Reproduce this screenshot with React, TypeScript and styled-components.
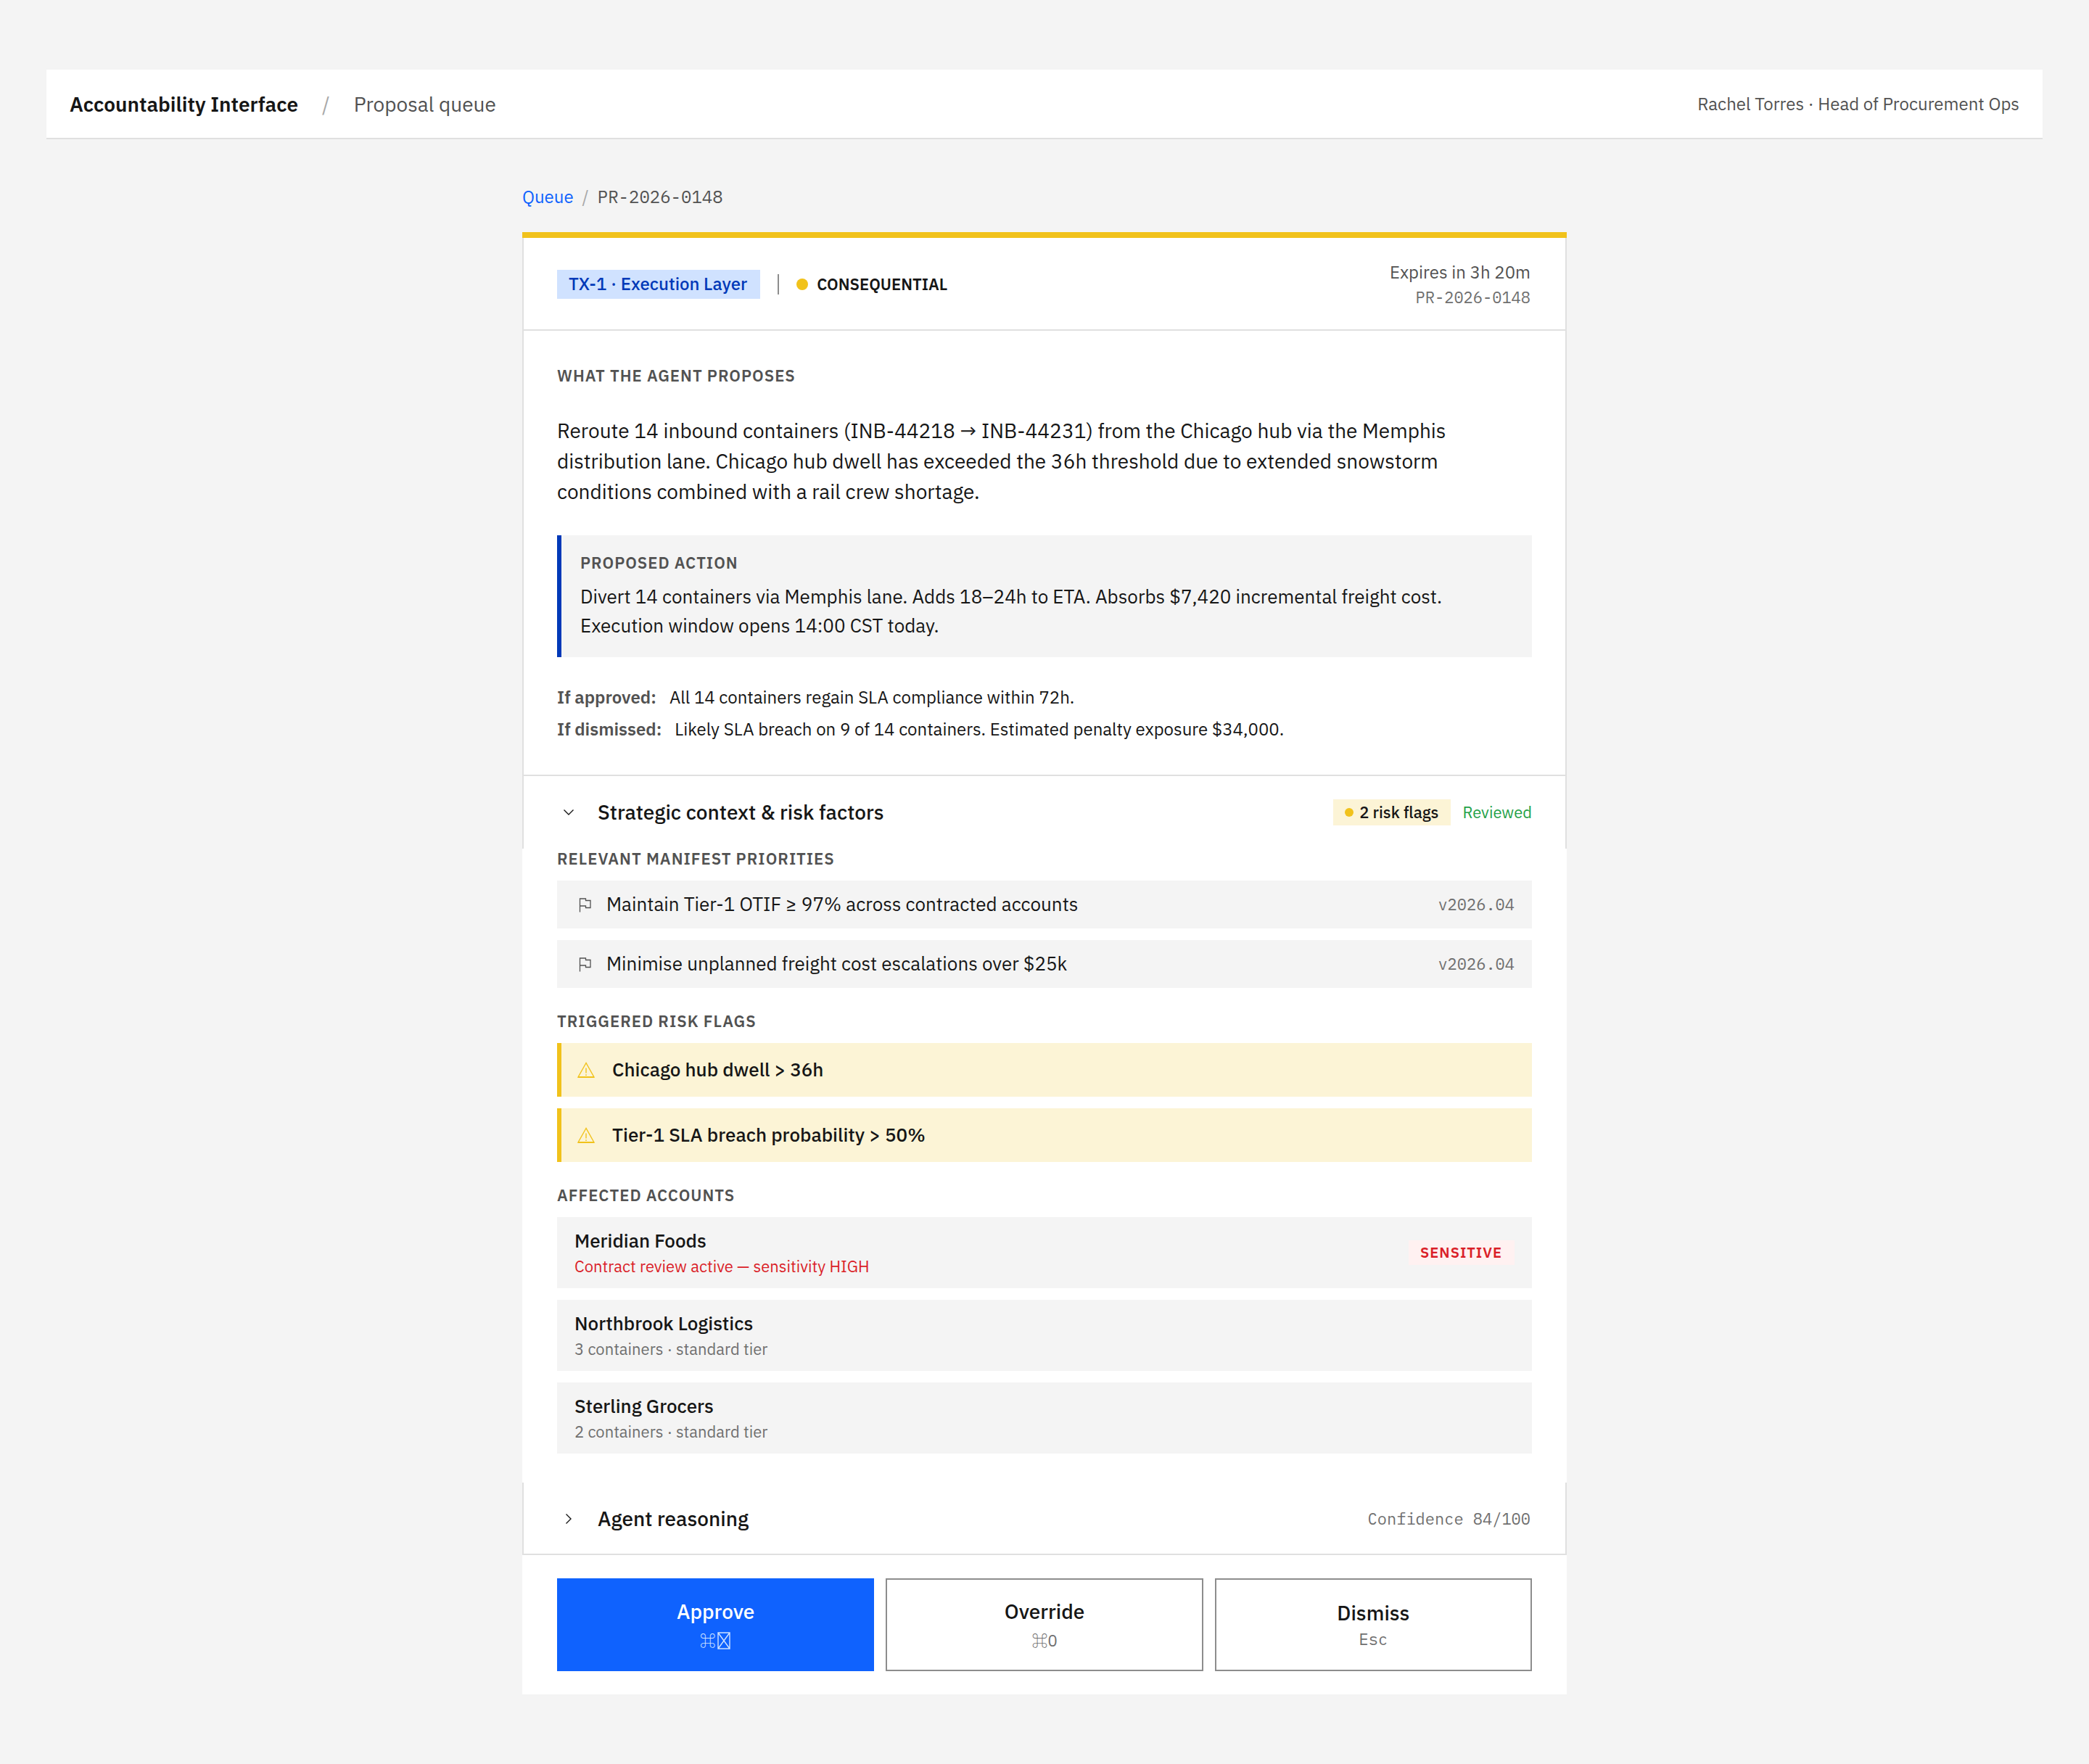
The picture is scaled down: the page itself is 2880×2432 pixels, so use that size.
import { useState } from 'react';
import styled, { createGlobalStyle } from 'styled-components';

const GlobalStyle = createGlobalStyle`
  * {
    box-sizing: border-box;
  }

  body {
    margin: 0;
    background: #f4f4f4;
    color: #161616;
    font-family: 'IBM Plex Sans', Roboto, 'Liberation Sans', sans-serif;
    font-size: 28px;
  }

  h1, h2, h3, p, ul, dl, dd {
    margin: 0;
    padding: 0;
  }

  ul {
    list-style: none;
  }

  button {
    font-family: inherit;
    color: inherit;
    cursor: pointer;
  }
`;

const Page = styled.div`
  padding: 96px 64px;
`;

const TopBar = styled.header`
  display: flex;
  align-items: center;
  justify-content: space-between;
  padding: 28px 32px 26px;
  background: #fff;
  border-bottom: 2px solid #e0e0e0;
  line-height: 40px;
`;

const BrandGroup = styled.div`
  display: flex;
  align-items: center;
  gap: 33px;
`;

const Brand = styled.h1`
  font-size: 28px;
  font-weight: 600;
`;

const Slash = styled.span`
  color: #a8a8a8;
`;

const PageName = styled.span`
  color: #525252;
`;

const UserName = styled.span`
  padding-bottom: 2px;
  font-size: 24px;
  line-height: 38px;
  color: #525252;
`;

const Main = styled.main`
  max-width: 1440px;
  margin: 64px auto 0;
`;

const Breadcrumb = styled.nav`
  display: flex;
  gap: 12px;
  margin-bottom: 34px;
  font-size: 24px;
  line-height: 30px;
`;

const CrumbLink = styled.a`
  color: #0f62fe;
  text-decoration: none;

  &:hover {
    text-decoration: underline;
  }
`;

const Mono = styled.span<{ $large?: boolean }>`
  font-family: 'IBM Plex Mono', 'Noto Sans CJK JP', 'Liberation Mono', monospace;
  font-size: ${({ $large }) => ($large ? 24 : 22)}px;
  font-weight: 400;
  color: ${({ $large }) => ($large ? '#525252' : '#6f6f6f')};
`;

const Card = styled.article`
  background: #fff;
  border-top: 8px solid #f1c21b;
`;

const Framed = styled.div`
  border: solid #e0e0e0;
  border-width: 0 2px;
`;

const CardHeader = styled.div`
  display: flex;
  align-items: center;
  justify-content: space-between;
  padding: 28px 48px 26px 46px;
  border-bottom: 2px solid #e0e0e0;
`;

const TagGroup = styled.div`
  display: flex;
  align-items: center;
  gap: 24px;
`;

const LayerTag = styled.span`
  padding: 0 18px 2px 16px;
  background: #d0e2ff;
  color: #0039b8;
  font-size: 24px;
  font-weight: 500;
  line-height: 38px;
`;

const Separator = styled.span`
  width: 2px;
  height: 28px;
  background: #8d8d8d;
`;

const Severity = styled.span`
  display: flex;
  align-items: center;
  gap: 12px;
  font-size: 22px;
  font-weight: 600;
  line-height: 40px;
`;

const Dot = styled.span<{ $size: number }>`
  width: ${({ $size }) => $size}px;
  height: ${({ $size }) => $size}px;
  border-radius: 50%;
  background: #f1c21b;
`;

const Expiry = styled.div`
  display: flex;
  flex-direction: column;
  align-items: flex-end;
  padding-bottom: 2px;
  font-size: 24px;
  line-height: 38px;
  color: #525252;

  ${Mono} {
    line-height: 32px;
  }
`;

const Proposal = styled.section`
  padding: 48px 46px 46px;
  border-bottom: 2px solid #e0e0e0;
`;

const Label = styled.h2`
  color: #525252;
  font-size: 22px;
  font-weight: 600;
  line-height: 28px;
  letter-spacing: 1px;
  text-transform: uppercase;
`;

const Summary = styled.p`
  max-width: 1280px;
  margin-top: 41px;
  line-height: 42px;
`;

const ActionNote = styled.div`
  margin: 39px 0 38px;
  padding: 24px 26px;
  background: #f4f4f4;
  border-left: 6px solid #0039b8;

  p {
    max-width: 1220px;
    margin-top: 12px;
    font-size: 26px;
    line-height: 40px;
  }
`;

const Outcomes = styled.dl`
  display: grid;
  gap: 10px;
  font-size: 24px;
  line-height: 34px;
`;

const Outcome = styled.div`
  display: flex;
  gap: 18px;

  dt {
    color: #525252;
    font-weight: 600;
  }
`;

const AccordionButton = styled.button`
  display: flex;
  align-items: center;
  gap: 24px;
  width: 100%;
  padding: 30px 46px;
  border: none;
  background: none;
  font-size: 28px;
  font-weight: 500;
  line-height: 40px;
  text-align: left;
`;

const AccordionTitle = styled.span`
  flex: 1;
`;

const AccordionMeta = styled.span`
  display: flex;
  align-items: center;
  gap: 16px;
  font-size: 22px;
  line-height: 36px;
`;

const RiskTag = styled.span`
  display: flex;
  align-items: center;
  gap: 8px;
  padding: 0 17px 0 16px;
  background: #fcf4d6;
`;

const Reviewed = styled.span`
  color: #24a148;
  font-weight: 400;
`;

const Details = styled.div`
  display: grid;
  gap: 32px;
  padding: 0 48px 40px;
`;

const List = styled.ul`
  display: grid;
  gap: 16px;
  margin-top: 16px;
`;

const RowText = styled.span`
  flex: 1;
  padding-bottom: 2px;
  font-size: 26px;
  line-height: 38px;
`;

const PriorityRow = styled.li`
  display: flex;
  align-items: center;
  gap: 16px;
  padding: 13px 24px;
  background: #f4f4f4;
  line-height: 40px;
`;

const RiskRow = styled.li`
  display: flex;
  align-items: center;
  gap: 22px;
  padding: 17px 20px;
  background: #fcf4d6;
  border-left: 6px solid #f1c21b;
  font-weight: 500;
`;

const AccountRow = styled.li`
  display: flex;
  align-items: center;
  justify-content: space-between;
  padding: 14px 24px;
  background: #f4f4f4;
`;

const AccountName = styled.h3`
  font-size: 26px;
  font-weight: 500;
  line-height: 36px;
`;

const AccountNote = styled.p<{ $alert?: boolean }>`
  margin-top: 2px;
  color: ${({ $alert }) => ($alert ? '#da1e28' : '#6f6f6f')};
  font-size: 22px;
  line-height: 32px;
`;

const SensitiveTag = styled.span`
  padding: 0 17px 0 16px;
  background: #fff1f1;
  color: #da1e28;
  font-size: 20px;
  font-weight: 600;
  line-height: 34px;
  letter-spacing: 1px;
`;

const Reasoning = styled(Framed)`
  border-bottom-width: 2px;

  ${AccordionButton} {
    padding: 30px 48px 28px 46px;
  }
`;

const Actions = styled.div`
  display: grid;
  grid-template-columns: repeat(3, 1fr);
  gap: 16px;
  padding: 32px 48px;
`;

const ActionButton = styled.button<{ $primary?: boolean }>`
  display: flex;
  flex-direction: column;
  align-items: center;
  justify-content: center;
  min-height: 128px;
  padding: 0 24px;
  border: 2px solid ${({ $primary }) => ($primary ? '#0f62fe' : '#8d8d8d')};
  background: ${({ $primary }) => ($primary ? '#0f62fe' : '#fff')};
  color: ${({ $primary }) => ($primary ? '#fff' : '#161616')};
  font-size: 28px;
  font-weight: 500;
  line-height: 40px;
`;

const Shortcut = styled(Mono)<{ $light?: boolean; $symbol?: boolean }>`
  display: flex;
  align-items: center;
  padding-top: ${({ $symbol }) => ($symbol ? 4 : 0)}px;
  color: ${({ $light }) => ($light ? '#d0e2ff' : '#6f6f6f')};
  line-height: 32px;
`;

const ChevronIcon = ({ open }: { open: boolean }) => (
  <svg width="32" height="32" viewBox="0 0 32 32" fill="none" stroke="#161616" strokeWidth="1.4" aria-hidden="true">
    <path d={open ? 'M9.5 12.5l6.5 6.5 6.5-6.5' : 'M12.5 9.5l6.5 6.5-6.5 6.5'} />
  </svg>
);

const FlagIcon = () => (
  <svg width="28" height="28" viewBox="0 0 28 28" fill="none" stroke="#525252" strokeWidth="1.3" aria-hidden="true">
    <path d="M7.5 24.5V6h8v2.5h6.5v10h-6.5v-2.5h-8" />
  </svg>
);

const WarningIcon = () => (
  <svg width="28" height="28" viewBox="0 0 28 28" fill="none" stroke="#f1c21b" strokeWidth="1.4" aria-hidden="true">
    <path d="M14 4.5L3 24h22z" />
    <path d="M3 24h22" strokeWidth="2" />
    <path d="M14 11.5v7M14 20.2v1.8" />
  </svg>
);

const CrossedBoxIcon = () => (
  <svg width="22" height="24" viewBox="0 0 22 24" fill="none" stroke="currentColor" strokeWidth="1.4" aria-hidden="true">
    <path d="M3 1h16v22H3zM3 1l16 22M19 1L3 23" />
  </svg>
);

const priorities = [
  { text: 'Maintain Tier-1 OTIF ≥ 97% across contracted accounts', version: 'v2026.04' },
  { text: 'Minimise unplanned freight cost escalations over $25k', version: 'v2026.04' }
];

const riskFlags = ['Chicago hub dwell > 36h', 'Tier-1 SLA breach probability > 50%'];

const accounts = [
  { name: 'Meridian Foods', note: 'Contract review active — sensitivity HIGH', sensitive: true },
  { name: 'Northbrook Logistics', note: '3 containers · standard tier', sensitive: false },
  { name: 'Sterling Grocers', note: '2 containers · standard tier', sensitive: false }
];

const App = () => {
  const [contextOpen, setContextOpen] = useState(true);

  return (
    <Page>
      <GlobalStyle />
      <TopBar>
        <BrandGroup>
          <Brand>Accountability Interface</Brand>
          <Slash>/</Slash>
          <PageName>Proposal queue</PageName>
        </BrandGroup>
        <UserName>Rachel Torres · Head of Procurement Ops</UserName>
      </TopBar>
      <Main>
        <Breadcrumb>
          <CrumbLink href="#queue">Queue</CrumbLink>
          <Slash>/</Slash>
          <Mono $large>PR-2026-0148</Mono>
        </Breadcrumb>
        <Card>
          <Framed>
            <CardHeader>
              <TagGroup>
                <LayerTag>TX-1 · Execution Layer</LayerTag>
                <Separator />
                <Severity>
                  <Dot $size={16} />
                  CONSEQUENTIAL
                </Severity>
              </TagGroup>
              <Expiry>
                <span>Expires in 3h 20m</span>
                <Mono>PR-2026-0148</Mono>
              </Expiry>
            </CardHeader>
            <Proposal>
              <Label>What the agent proposes</Label>
              <Summary>
                Reroute 14 inbound containers (INB-44218 → INB-44231) from the Chicago hub via the Memphis
                distribution lane. Chicago hub dwell has exceeded the 36h threshold due to extended snowstorm
                conditions combined with a rail crew shortage.
              </Summary>
              <ActionNote>
                <Label>Proposed action</Label>
                <p>
                  Divert 14 containers via Memphis lane. Adds 18–24h to ETA. Absorbs $7,420 incremental freight
                  cost. Execution window opens 14:00 CST today.
                </p>
              </ActionNote>
              <Outcomes>
                <Outcome>
                  <dt>If approved:</dt>
                  <dd>All 14 containers regain SLA compliance within 72h.</dd>
                </Outcome>
                <Outcome>
                  <dt>If dismissed:</dt>
                  <dd>Likely SLA breach on 9 of 14 containers. Estimated penalty exposure $34,000.</dd>
                </Outcome>
              </Outcomes>
            </Proposal>
            <AccordionButton aria-expanded={contextOpen} onClick={() => setContextOpen(!contextOpen)}>
              <ChevronIcon open={contextOpen} />
              <AccordionTitle>Strategic context &amp; risk factors</AccordionTitle>
              <AccordionMeta>
                <RiskTag>
                  <Dot $size={12} />
                  2 risk flags
                </RiskTag>
                <Reviewed>Reviewed</Reviewed>
              </AccordionMeta>
            </AccordionButton>
          </Framed>
          {contextOpen && (
            <Details>
              <section>
                <Label>Relevant manifest priorities</Label>
                <List>
                  {priorities.map(priority => (
                    <PriorityRow key={priority.text}>
                      <FlagIcon />
                      <RowText>{priority.text}</RowText>
                      <Mono>{priority.version}</Mono>
                    </PriorityRow>
                  ))}
                </List>
              </section>
              <section>
                <Label>Triggered risk flags</Label>
                <List>
                  {riskFlags.map(flag => (
                    <RiskRow key={flag}>
                      <WarningIcon />
                      <RowText>{flag}</RowText>
                    </RiskRow>
                  ))}
                </List>
              </section>
              <section>
                <Label>Affected accounts</Label>
                <List>
                  {accounts.map(account => (
                    <AccountRow key={account.name}>
                      <div>
                        <AccountName>{account.name}</AccountName>
                        <AccountNote $alert={account.sensitive}>{account.note}</AccountNote>
                      </div>
                      {account.sensitive && <SensitiveTag>SENSITIVE</SensitiveTag>}
                    </AccountRow>
                  ))}
                </List>
              </section>
            </Details>
          )}
          <Reasoning>
            <AccordionButton aria-expanded={false}>
              <ChevronIcon open={false} />
              <AccordionTitle>Agent reasoning</AccordionTitle>
              <Mono>Confidence 84/100</Mono>
            </AccordionButton>
          </Reasoning>
          <Actions>
            <ActionButton $primary>
              Approve
              <Shortcut $light $symbol>
                ⌘<CrossedBoxIcon />
              </Shortcut>
            </ActionButton>
            <ActionButton>
              Override
              <Shortcut $symbol>⌘O</Shortcut>
            </ActionButton>
            <ActionButton>
              Dismiss
              <Shortcut>Esc</Shortcut>
            </ActionButton>
          </Actions>
        </Card>
      </Main>
    </Page>
  );
};

export default App;
